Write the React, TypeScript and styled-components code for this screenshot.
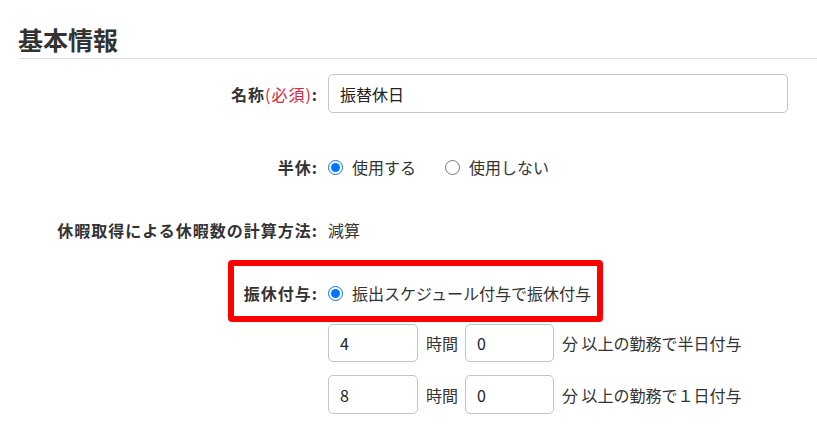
import React from "react";
import styled, { createGlobalStyle } from "styled-components";

const GlobalStyle = createGlobalStyle`
  html, body { margin: 0; padding: 0; background: #fff; }
  body {
    font-family: "Noto Sans CJK JP", "Noto Sans", sans-serif;
    color: #333;
  }
  * { box-sizing: border-box; }
`;

const Page = styled.div`
  width: 817px;
  padding: 24px 0 0 18px;
`;

const Heading = styled.h2`
  margin: 0;
  font-size: 25px;
  line-height: 30px;
  font-weight: 700;
  color: #333;
  padding-bottom: 4px;
  border-bottom: 1px solid #dcdcdc;
`;

const Form = styled.div`
  display: flex;
  flex-direction: column;
`;

const Row = styled.div<{ $mt: number; $h: number }>`
  position: relative;
  display: grid;
  grid-template-columns: 300px 1fr;
  column-gap: 10px;
  align-items: center;
  margin-top: ${(p) => p.$mt}px;
  height: ${(p) => p.$h}px;
`;

const Label = styled.div`
  text-align: right;
  font-size: 16px;
  font-weight: 700;
  letter-spacing: 1px;
  color: #333;
  white-space: nowrap;
`;

const Req = styled.span`
  color: #d9263c;
  font-weight: 400;
`;

const Value = styled.div`
  display: flex;
  align-items: center;
  font-size: 16px;
  color: #333;
  white-space: nowrap;
`;

const TextInput = styled.input<{ $w: number; $h: number }>`
  width: ${(p) => p.$w}px;
  height: ${(p) => p.$h}px;
  border: 1px solid #c4c4c4;
  border-radius: 5px;
  padding: 0 11px;
  font-family: "Noto Sans CJK JP", "Noto Sans", sans-serif;
  font-size: 16px;
  color: #222;
  background: #fff;
  outline: none;
`;

const RadioLabel = styled.label<{ $ml?: number }>`
  display: inline-flex;
  align-items: center;
  gap: 9px;
  margin-left: ${(p) => p.$ml ?? 0}px;
  cursor: pointer;
`;

const Radio = styled.input.attrs({ type: "radio" })`
  width: 15px;
  height: 15px;
  margin: 0;
  accent-color: #0075ff;
`;

const Unit = styled.span<{ $mx: number }>`
  margin: 0 ${(p) => p.$mx}px 0 8px;
`;

const Highlight = styled.div`
  position: absolute;
  left: 210px;
  top: -13px;
  width: 375px;
  height: 62px;
  border: 6px solid #ff0000;
  border-radius: 4px;
  pointer-events: none;
`;

export default function App() {
  return (
    <>
      <GlobalStyle />
      <Page>
        <Heading>基本情報</Heading>
        <Form>
          <Row $mt={15} $h={39}>
            <Label>
              名称<Req>(必須)</Req>:
            </Label>
            <Value>
              <TextInput $w={460} $h={39} defaultValue="振替休日" />
            </Value>
          </Row>
          <Row $mt={34} $h={40}>
            <Label>半休:</Label>
            <Value>
              <RadioLabel>
                <Radio name="half" defaultChecked />
                使用する
              </RadioLabel>
              <RadioLabel $ml={29}>
                <Radio name="half" />
                使用しない
              </RadioLabel>
            </Value>
          </Row>
          <Row $mt={23} $h={40}>
            <Label>休暇取得による休暇数の計算方法:</Label>
            <Value>減算</Value>
          </Row>
          <Row $mt={23} $h={40}>
            <Label>振休付与:</Label>
            <Value>
              <RadioLabel>
                <Radio name="grant" defaultChecked />
                振出スケジュール付与で振休付与
              </RadioLabel>
            </Value>
            <Highlight />
          </Row>
          <Row $mt={11} $h={38}>
            <div />
            <Value>
              <TextInput $w={90} $h={38} defaultValue="4" />
              <Unit $mx={7}>時間</Unit>
              <TextInput $w={89} $h={38} defaultValue="0" />
              <Unit $mx={0}>分 以上の勤務で半日付与</Unit>
            </Value>
          </Row>
          <Row $mt={13} $h={39}>
            <div />
            <Value>
              <TextInput $w={90} $h={39} defaultValue="8" />
              <Unit $mx={7}>時間</Unit>
              <TextInput $w={89} $h={39} defaultValue="0" />
              <Unit $mx={0}>分 以上の勤務で１日付与</Unit>
            </Value>
          </Row>
        </Form>
      </Page>
    </>
  );
}
